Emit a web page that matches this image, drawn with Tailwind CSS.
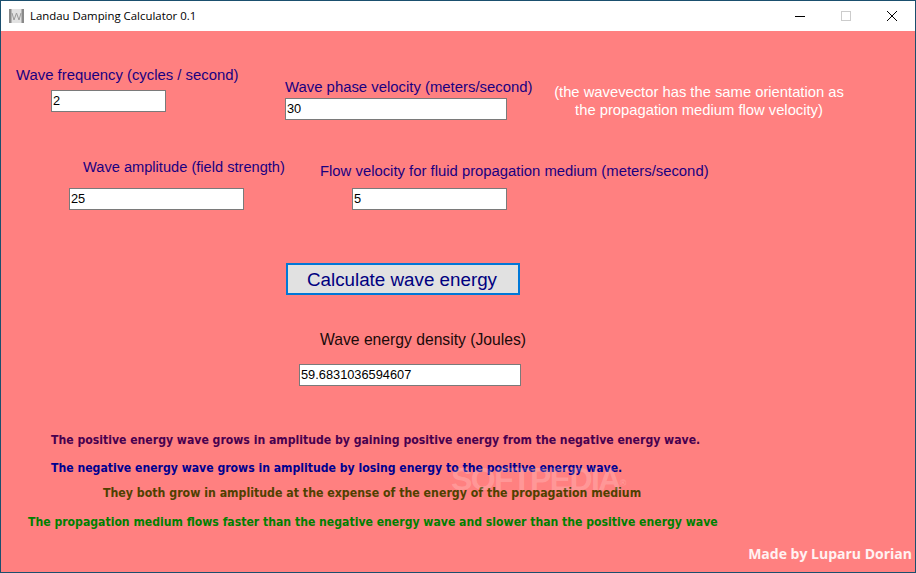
<!doctype html>
<html><head><meta charset="utf-8"><script src="https://cdn.jsdelivr.net/npm/@tailwindcss/browser@4"></script></head>
<body class="m-0 overflow-hidden">
<div class="relative flex h-[573px] w-[916px] flex-col overflow-hidden border border-[#1a4f6e] bg-[#ff8080] font-['Liberation_Sans',sans-serif]">
  <header class="flex h-[30px] shrink-0 items-center bg-white">
    <svg class="ml-[8px] h-[15px] w-[16px]" viewBox="0 0 16 15"><rect x="0" y="0" width="15" height="14" fill="#e2e2e2"/><rect x="0" y="0" width="2.5" height="14" fill="#8a8a8a"/><rect x="12.5" y="0" width="2.5" height="14" fill="#8a8a8a"/><path d="M3 4 L5 11 L7.5 4 L10 11 L12 4" fill="none" stroke="#9a9a9a" stroke-width="1"/></svg>
    <span class="ml-[5px] font-['Open_Sans',sans-serif] text-[11.4px] text-black">Landau Damping Calculator 0.1</span>
    <div class="ml-auto flex items-center">
      <svg class="mr-[36px] h-[10px] w-[10px]" viewBox="0 0 10 10"><path d="M0 5.5H10" stroke="#000" stroke-width="1"/></svg>
      <svg class="mr-[36px] h-[10px] w-[10px]" viewBox="0 0 10 10"><rect x="0.5" y="0.5" width="9" height="9" fill="none" stroke="#ccc"/></svg>
      <svg class="mr-[18px] h-[10px] w-[10px]" viewBox="0 0 10 10"><path d="M0 0L10 10M10 0L0 10" stroke="#000" stroke-width="1"/></svg>
    </div>
  </header>
  <main class="flex flex-1 flex-col">
    <div class="flex h-[100px] items-start">
      <div class="ml-[15px] mt-[35px] w-[269px]">
        <p class="text-[14.87px] leading-[18px] text-[#1a0080]">Wave frequency (cycles / second)</p>
        <div class="ml-[35px] mt-[6px] flex h-[22px] w-[115px] items-center border border-[#7a7a7a] bg-white px-[1px] text-[12.8px] text-black">2</div>
      </div>
      <div class="mt-[47px] w-[269px]">
        <p class="text-[14.88px] leading-[18px] text-[#1a0080]">Wave phase velocity (meters/second)</p>
        <div class="mt-[2px] flex h-[22px] w-[222px] items-center border border-[#7a7a7a] bg-white px-[1px] text-[12.8px] text-black">30</div>
      </div>
      <p class="mt-[52px] w-[290px] whitespace-nowrap text-center text-[14.78px] leading-[18px] text-white">(the wavevector has the same orientation as<br>the propagation medium flow velocity)</p>
    </div>
    <div class="flex h-[82px] items-start">
      <div class="ml-[68px] mt-[27px] w-[251px]">
        <p class="ml-[14px] text-[14.64px] leading-[18px] text-[#1a0080]">Wave amplitude (field strength)</p>
        <div class="mt-[12px] flex h-[22px] w-[175px] items-center border border-[#7a7a7a] bg-white px-[1px] text-[12.8px] text-black">25</div>
      </div>
      <div class="mt-[31px]">
        <p class="text-[14.85px] leading-[18px] text-[#1a0080]">Flow velocity for fluid propagation medium (meters/second)</p>
        <div class="ml-[32px] mt-[8px] flex h-[22px] w-[155px] items-center border border-[#7a7a7a] bg-white px-[1px] text-[12.8px] text-black">5</div>
      </div>
    </div>
    <button class="ml-[285px] mt-[50px] h-[32px] w-[234px] border-2 border-[#0078d7] bg-[#e1e1e1] pr-[2px] pt-[1px] text-center text-[18.8px] text-[#000080]">Calculate wave energy</button>
    <p class="ml-[319px] mt-[36px] text-[15.7px] leading-[18px] text-[#1a0a0a]">Wave energy density (Joules)</p>
    <div class="ml-[298px] mt-[15px] flex h-[22px] w-[222px] items-center border border-[#7a7a7a] bg-white px-[1px] text-[12.8px] text-black">59.6831036594607</div>
    <div class="mt-[46px] flex flex-col font-['DejaVu_Sans_Condensed','DejaVu_Sans',sans-serif] text-[12.13px] font-bold leading-[16px]">
      <p class="ml-[50px] text-[#48004f]">The positive energy wave grows in amplitude by gaining positive energy from the negative energy wave.</p>
      <p class="ml-[50px] mt-[12px] text-[#000090]">The negative energy wave grows in amplitude by losing energy to the positive energy wave.</p>
      <p class="ml-[102px] mt-[9px] text-[12.25px] text-[#504000]">They both grow in amplitude at the expense of the energy of the propagation medium</p>
      <p class="ml-[27px] mt-[13px] text-[#008000]">The propagation medium flows faster than the negative energy wave and slower than the positive energy wave</p>
    </div>
    <p class="mr-[3px] mt-[15px] text-right font-['Open_Sans',sans-serif] text-[14px] font-bold leading-[18px] text-white/90">Made by Luparu Dorian</p>
  </main>
  <span class="pointer-events-none absolute left-[450px] top-[459px] font-['Liberation_Sans',sans-serif] text-[32px] font-bold leading-[38px] tracking-[-1.6px] text-white/20">SOFTPEDIA<sup class="text-[9px]">®</sup></span>
</div>
</body></html>
